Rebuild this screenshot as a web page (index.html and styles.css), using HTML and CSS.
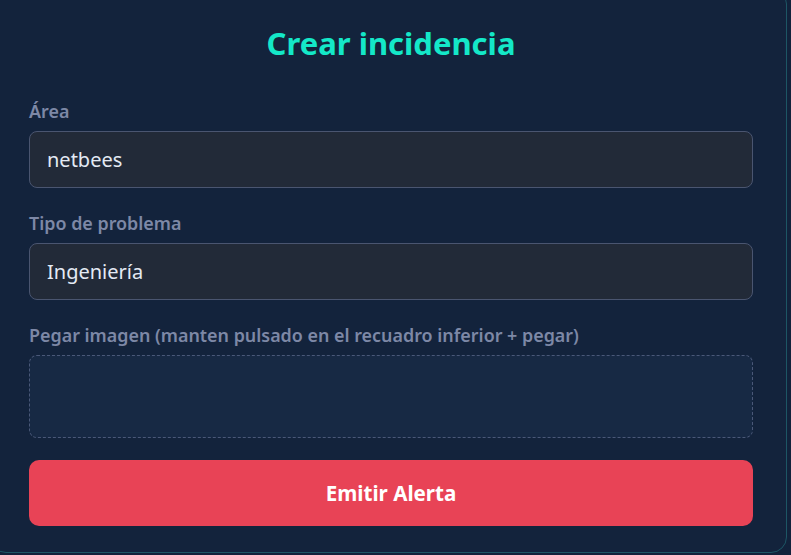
FILE: index.html
```html
<!DOCTYPE html>
<html lang="es">
<head>
<meta charset="utf-8">
<title>Crear incidencia</title>
<link rel="stylesheet" href="styles.css">
</head>
<body>
<main class="card">
  <h1 class="title">Crear incidencia</h1>
  <form class="form">
    <div class="field">
      <label class="label" for="area">Área</label>
      <div class="input" id="area">netbees</div>
    </div>
    <div class="field">
      <label class="label" for="tipo">Tipo de problema</label>
      <div class="input" id="tipo">Ingeniería</div>
    </div>
    <div class="field">
      <label class="label">Pegar imagen (manten pulsado en el recuadro inferior + pegar)</label>
      <div class="dropzone"></div>
    </div>
    <button type="button" class="btn">Emitir Alerta</button>
  </form>
</main>
</body>
</html>
```

FILE: styles.css
```css
* { box-sizing: border-box; }
html, body {
  margin: 0;
  height: 100%;
  overflow: hidden;
  background: #12223b;
  font-family: "Noto Sans", "Open Sans", sans-serif;
}
.card {
  margin: -12px 4px 0 -10px;
  height: 565px;
  background: #13233c;
  border: 1px solid #1d5665;
  border-radius: 16px;
  padding: 32px 33px 27px 38px;
  display: flex;
  flex-direction: column;
}
.title {
  margin: 0 0 34px;
  text-align: center;
  color: #14e8c8;
  font-size: 31px;
  font-weight: 700;
  line-height: 44px;
}
.form {
  display: flex;
  flex-direction: column;
}
.field {
  display: flex;
  flex-direction: column;
  margin-bottom: 23px;
}
.label {
  color: #7d88a6;
  font-size: 17.9px;
  font-weight: 600;
  line-height: 24px;
  margin-bottom: 8px;
}
.input {
  height: 57px;
  background: #222a38;
  border: 1px solid #4a5570;
  border-radius: 8px;
  padding: 0 17px;
  display: flex;
  align-items: center;
  color: #e4eaf4;
  font-size: 20px;
}
.dropzone {
  height: 83px;
  background: #172944;
  border: 1px dashed #4a5878;
  border-radius: 8px;
}
.btn {
  height: 66px;
  margin-top: -1px;
  border: none;
  border-radius: 10px;
  background: #e84356;
  color: #ffffff;
  font-family: inherit;
  font-size: 20.6px;
  font-weight: 700;
}
```
